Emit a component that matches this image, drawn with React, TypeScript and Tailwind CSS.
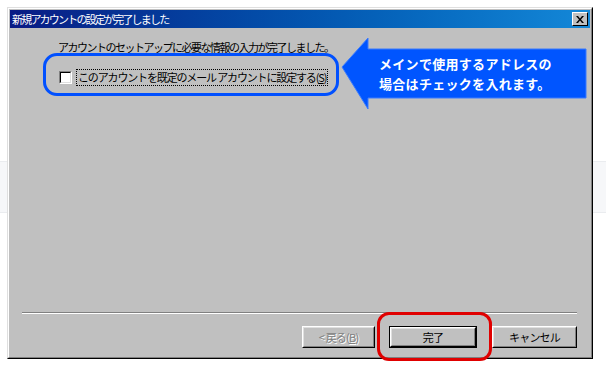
import React from "react";

const jp = "font-['MS_UI_Gothic','Noto_Sans_CJK_JP',sans-serif]";

const WinButton = ({
  label,
  width,
  disabled,
  isDefault,
}: {
  label: React.ReactNode;
  width: string;
  disabled?: boolean;
  isDefault?: boolean;
}) => {
  const inner = (
    <div className="h-full border border-t-white border-l-white border-r-black border-b-black">
      <div className="flex h-full items-center justify-center border border-t-[#dfdfdf] border-l-[#dfdfdf] border-r-[#808080] border-b-[#808080]">
        <span
          className={
            disabled
              ? "text-[11px] tracking-[-0.8px] leading-none text-[#808080] [text-shadow:1px_1px_0_#ffffff]"
              : "text-[11px] tracking-[-0.8px] leading-none text-black"
          }
        >
          {label}
        </span>
      </div>
    </div>
  );
  return (
    <div className={`${width} h-[22px]`}>
      {isDefault ? <div className="h-full border border-black">{inner}</div> : inner}
    </div>
  );
};

export default function App() {
  return (
    <div className={`relative w-[606px] h-[371px] bg-white overflow-hidden pl-[7px] pt-[7px] ${jp}`}>
      {/* faint band behind the dialog */}
      <div className="absolute left-0 right-0 top-[161px] h-[52px] bg-[#f6f7f9] border-y border-[#eaecef]" />

      {/* dialog window */}
      <div className="relative w-[586px] h-[352px] border border-t-[#dfdfdf] border-l-[#dfdfdf] border-r-black border-b-black">
        <div className="h-full border border-t-white border-l-white border-r-[#808080] border-b-[#808080] bg-[#c0c0c0] p-px flex flex-col">
          {/* title bar */}
          <div className="h-[18px] flex items-center justify-between bg-gradient-to-r from-[#0a1a84] to-[#1488d8] pl-[2px] pr-[2px]">
            <span className="text-[11px] tracking-[-1.8px] leading-none text-white">新規アカウントの設定が完了しました</span>
            <div className="w-[16px] h-[14px] bg-[#c0c0c0] border border-t-white border-l-white border-r-black border-b-black flex items-center justify-center">
              <svg width="8" height="7" viewBox="0 0 8 7">
                <path d="M0 0h2l2 2.5L6 0h2L5 3.5 8 7H6L4 4.5 2 7H0l3-3.5z" fill="#000" />
              </svg>
            </div>
          </div>

          {/* body */}
          <div className="flex-1 flex flex-col">
            <div className="flex-1 pl-[48px] pt-[12px]">
              <p className="text-[11px] tracking-[-1.5px] leading-[14px] text-black">
                アカウントのセットアップに必要な情報の入力が完了しました。
              </p>
              <div className="mt-[15px] flex items-center ml-[1px]">
                <div className="w-[13px] h-[13px] border border-t-[#808080] border-l-[#808080] border-r-white border-b-white">
                  <div className="w-full h-full bg-white border border-t-black border-l-black border-r-[#dfdfdf] border-b-[#dfdfdf]" />
                </div>
                <span className="ml-[4px] px-[1px] py-[1px] border border-dotted border-black text-[11px] tracking-[-1.15px] leading-[13px] text-black">
                  このアカウントを既定のメール アカウントに設定する(<span className="underline">S</span>)
                </span>
              </div>
            </div>

            {/* separator */}
            <div className="mx-[12px] mr-[13px] border-t border-t-[#808080] border-b border-b-white" />

            {/* buttons */}
            <div className="flex justify-end gap-[14px] pr-[13px] pt-[12px] pb-[8px]">
              <WinButton
                width="w-[73px]"
                disabled
                label={
                  <>
                    &lt; 戻る(<span className="underline">B</span>)
                  </>
                }
              />
              <WinButton width="w-[88px]" isDefault label="完了" />
              <div className="ml-px">
                <WinButton width="w-[85px]" label="キャンセル" />
              </div>
            </div>
          </div>
        </div>
      </div>

      {/* annotation: blue rounded frame around checkbox */}
      <div className="absolute left-[43px] top-[53px] w-[296px] h-[43px] border-[3px] border-[#0050ff] rounded-[14px]" />

      {/* annotation: callout arrow */}
      <svg className="absolute left-0 top-0" width="606" height="371" viewBox="0 0 606 371">
        <polygon
          points="342,67 368,38 368,49 586,49 586,98 368,98 368,109"
          fill="#0055ff"
          stroke="#3a7bff"
          strokeWidth="1"
        />
      </svg>
      <div className="absolute left-[379px] top-[54px] text-white font-bold text-[13px] leading-[20px] tracking-[0.3px]">
        <div className="h-[20px]">メインで使用するアドレスの</div>
        <div className="h-[20px]">場合はチェックを入れます。</div>
      </div>

      {/* annotation: red frame around 完了 */}
      <div className="absolute left-[377px] top-[312px] w-[115px] h-[49px] border-[3px] border-[#e00000] rounded-[12px]" />
    </div>
  );
}
